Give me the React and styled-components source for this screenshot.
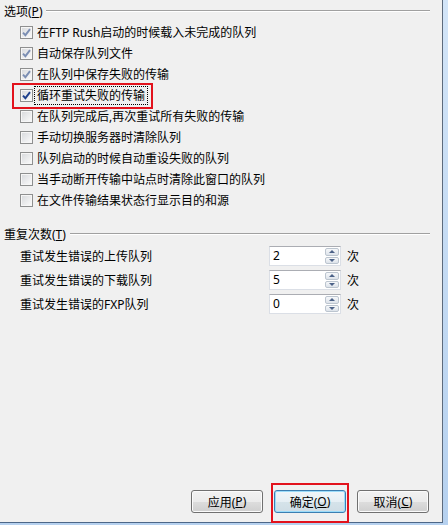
import React from 'react';
import styled, { createGlobalStyle } from 'styled-components';

const GlobalStyle = createGlobalStyle`
  html, body {
    margin: 0;
    padding: 0;
    background: #c5dcf4;
  }
  body {
    font-family: "Noto Sans", "Noto Sans CJK SC", sans-serif;
    font-size: 12px;
    color: #000;
  }
`;

const Frame = styled.div`
  width: 448px;
  height: 525px;
  box-sizing: border-box;
  display: flex;
  padding: 0 5px 2px 0;
  background: linear-gradient(#d3e5f8, #b6d1ef);
`;

const Panel = styled.div`
  flex: 1;
  position: relative;
  display: flex;
  flex-direction: column;
  box-sizing: border-box;
  padding: 5px 0 9px 4px;
  background: #f0f0f0;
  border-right: 1px solid #5d6b7d;
  border-bottom: 1px solid #4d6788;
`;

const GroupTitle = styled.div`
  display: flex;
  align-items: center;
  height: 14px;
  line-height: 14px;
  margin-top: ${({ $top }) => $top || 0}px;
  margin-right: 12px;
  white-space: nowrap;
  &::after {
    content: '';
    flex: 1;
    margin-left: 4px;
    border-top: 1px solid #a0a0a0;
    border-bottom: 1px solid #ffffff;
    transform: translateY(-1px);
  }
`;

const CheckList = styled.div`
  display: flex;
  flex-direction: column;
  margin-top: 3px;
  padding-left: 16px;
`;

const CheckRow = styled.div`
  position: relative;
  display: flex;
  align-items: center;
  gap: 3px;
  height: 21px;
  white-space: nowrap;
`;

const Box = styled.span`
  width: 13px;
  height: 13px;
  box-sizing: border-box;
  flex: none;
  display: flex;
  align-items: center;
  justify-content: center;
  border: 1px solid #8e8f8f;
  box-shadow: inset 0 0 0 1px #f6f6f6;
  background: linear-gradient(135deg, #d6d8db, #fcfcfc);
`;

const Label = styled.span`
  line-height: 15px;
  padding: 0 1px;
  outline: ${({ $focus }) => ($focus ? '1px dotted #000' : 'none')};
  outline-offset: 1px;
`;

const Highlight = styled.div`
  position: absolute;
  top: ${({ $top }) => $top}px;
  left: ${({ $left }) => $left}px;
  width: ${({ $w }) => $w}px;
  height: ${({ $h }) => $h}px;
  box-sizing: border-box;
  border: 2px solid #e2121c;
  pointer-events: none;
`;

const SpinList = styled.div`
  display: flex;
  flex-direction: column;
  margin-top: 2px;
  padding-left: 16px;
`;

const SpinRow = styled.div`
  display: grid;
  grid-template-columns: 249px 72px auto;
  align-items: center;
  height: 24px;
`;

const Unit = styled.span`
  padding-left: 6px;
`;

const SpinBox = styled.div`
  height: 20px;
  box-sizing: border-box;
  display: flex;
  background: #fff;
  border: 1px solid #dbdfe6;
  border-top-color: #abadb3;
`;

const SpinValue = styled.span`
  flex: 1;
  padding-left: 3px;
  line-height: 18px;
`;

const Arrows = styled.div`
  width: 15px;
  display: flex;
  flex-direction: column;
  gap: 1px;
  padding: 1px 1px 1px 0;
  box-sizing: border-box;
`;

const Arrow = styled.span`
  flex: 1;
  display: flex;
  align-items: center;
  justify-content: center;
  border: 1px solid #bcc5cf;
  border-radius: 2px;
  background: linear-gradient(#f6f8fa, #dde3ea);
  &::before {
    content: '';
    border-left: 3px solid transparent;
    border-right: 3px solid transparent;
    ${({ $down }) =>
      $down ? 'border-top: 3px solid #4c6288;' : 'border-bottom: 3px solid #4c6288;'}
  }
`;

const ButtonRow = styled.div`
  margin-top: auto;
  display: flex;
  justify-content: flex-end;
  gap: 11px;
  padding-right: 13px;
`;

const ButtonWrap = styled.div`
  position: relative;
`;

const Button = styled.div`
  width: 72px;
  height: 23px;
  box-sizing: border-box;
  display: flex;
  align-items: center;
  justify-content: center;
  border-radius: 3px;
  border: 1px solid ${({ $default }) => ($default ? '#3c7fb1' : '#707070')};
  box-shadow: inset 0 0 0 1px ${({ $default }) => ($default ? '#9bdcfa' : '#fbfbfb')};
  background: ${({ $default }) =>
    $default
      ? 'linear-gradient(#f0f6f9 0%, #e6eff4 50%, #d5e3ea 51%, #cfdde5 100%)'
      : 'linear-gradient(#f2f2f2 0%, #ebebeb 50%, #dddddd 51%, #cfcfcf 100%)'};
`;

const Check = ({ color }) => (
  <svg width="9" height="9" viewBox="0 0 9 9">
    <path d="M1 4.6 L3.4 7.2 L8 1.2" fill="none" stroke={color} strokeWidth="1.9" />
  </svg>
);

const options = [
  { text: '在FTP Rush启动的时候载入未完成的队列', checked: true },
  { text: '自动保存队列文件', checked: true },
  { text: '在队列中保存失败的传输', checked: true },
  { text: '循环重试失败的传输', checked: true, focus: true },
  { text: '在队列完成后,再次重试所有失败的传输' },
  { text: '手动切换服务器时清除队列' },
  { text: '队列启动的时候自动重设失败的队列' },
  { text: '当手动断开传输中站点时清除此窗口的队列' },
  { text: '在文件传输结果状态行显示目的和源' },
];

const retries = [
  { label: '重试发生错误的上传队列', value: 2 },
  { label: '重试发生错误的下载队列', value: 5 },
  { label: '重试发生错误的FXP队列', value: 0 },
];

export default function App() {
  return (
    <>
      <GlobalStyle />
      <Frame>
        <Panel>
          <GroupTitle>选项(<u>P</u>)</GroupTitle>
          <CheckList>
            {options.map((o, i) => (
              <CheckRow key={i}>
                <Box>{o.checked && <Check color={o.focus ? '#1c3f8c' : '#7b8eb3'} />}</Box>
                <Label $focus={o.focus}>{o.text}</Label>
                {o.focus && <Highlight $top={-2} $left={-8} $w={141} $h={26} />}
              </CheckRow>
            ))}
          </CheckList>

          <GroupTitle $top={17}>重复次数(<u>T</u>)</GroupTitle>
          <SpinList>
            {retries.map((r) => (
              <SpinRow key={r.label}>
                <span>{r.label}</span>
                <SpinBox>
                  <SpinValue>{r.value}</SpinValue>
                  <Arrows>
                    <Arrow />
                    <Arrow $down />
                  </Arrows>
                </SpinBox>
                <Unit>次</Unit>
              </SpinRow>
            ))}
          </SpinList>

          <ButtonRow>
            <ButtonWrap>
              <Button>应用(<u>P</u>)</Button>
            </ButtonWrap>
            <ButtonWrap>
              <Button $default>确定(<u>O</u>)</Button>
              <Highlight $top={-7} $left={-3} $w={78} $h={40} />
            </ButtonWrap>
            <ButtonWrap>
              <Button>取消(<u>C</u>)</Button>
            </ButtonWrap>
          </ButtonRow>
        </Panel>
      </Frame>
    </>
  );
}
